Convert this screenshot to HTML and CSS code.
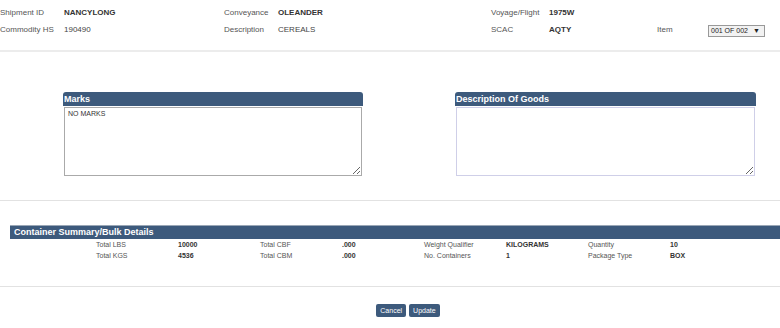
FILE: index.html
```html
<!DOCTYPE html>
<html lang="en">
<head>
  <meta charset="UTF-8" />
  <meta name="viewport" content="width=device-width, initial-scale=1.0" />
  <title>Shipment Item</title>
  <link rel="stylesheet" href="styles.css">
</head>
<body>
  <section class="shipment">
    <span class="lbl">Shipment ID</span><span class="val">NANCYLONG</span>
    <span class="lbl">Conveyance</span><span class="val">OLEANDER</span>
    <span class="lbl">Voyage/Flight</span><span class="val">1975W</span>
    <span></span><span></span>

    <span class="lbl">Commodity HS</span><span class="plain">190490</span>
    <span class="lbl">Description</span><span class="plain">CEREALS</span>
    <span class="lbl">SCAC</span><span class="val">AQTY</span>
    <span class="lbl">Item</span>
    <span class="item-select">001 OF 002 <b>▼</b></span>
  </section>

  <section class="notes">
    <div class="panel marks">
      <h3>Marks</h3>
      <textarea>NO MARKS</textarea>
    </div>
    <div class="panel goods">
      <h3>Description Of Goods</h3>
      <textarea></textarea>
    </div>
  </section>

  <section class="summary">
    <h3>Container Summary/Bulk Details</h3>
    <div class="summary-grid">
      <span class="lbl">Total LBS</span><span class="val">10000</span>
      <span class="lbl">Total CBF</span><span class="val">.000</span>
      <span class="lbl">Weight Qualifier</span><span class="val">KILOGRAMS</span>
      <span class="lbl">Quantity</span><span class="val">10</span>
      <span class="lbl">Total KGS</span><span class="val">4536</span>
      <span class="lbl">Total CBM</span><span class="val">.000</span>
      <span class="lbl">No. Containers</span><span class="val">1</span>
      <span class="lbl">Package Type</span><span class="val">BOX</span>
    </div>
  </section>

  <section class="actions">
    <button>Cancel</button>
    <button>Update</button>
  </section>
</body>
</html>
```

FILE: styles.css
```css
:root {
  --bar: #3d5a7c;
  --line: #e2e2e2;
}

body {
  margin: 0;
  font-family: 'Liberation Sans', Arial, sans-serif;
  font-size: 8px;
  color: #333;
  background: #fff;
}

.lbl {
  color: #555;
}

.val {
  font-weight: bold;
  color: #333;
}

.plain {
  color: #444;
}

.shipment {
  display: grid;
  grid-template-columns: 64px 160px 54px 213px 58px 108px 51px 60px;
  grid-auto-rows: 17px;
  align-items: center;
  padding: 4px 0 12px;
  border-bottom: 2px solid #ececec;
}

.item-select {
  width: 53px;
  height: 10px;
  line-height: 10px;
  border: 1px solid #999;
  background: #f2f2f2;
  font-size: 7px;
  padding-left: 2px;
  color: #222;
  margin-top: 3px;
}

.item-select b {
  font-size: 7px;
  margin-left: 3px;
}

.notes {
  display: flex;
  padding: 40px 0 24px;
  border-bottom: 1px solid var(--line);
}

.panel h3 {
  margin: 0;
  height: 14px;
  line-height: 14px;
  background: var(--bar);
  color: #fff;
  font-size: 9px;
  font-weight: bold;
  padding-left: 1px;
  border-radius: 3px 3px 0 0;
}

.panel textarea {
  display: block;
  box-sizing: border-box;
  width: calc(100% - 2px);
  height: 69px;
  margin: 1px 0 0 1px;
  padding: 2px 3px;
  font-family: 'Liberation Sans', Arial, sans-serif;
  font-size: 7px;
  color: #333;
  border: 1px solid #aaa;
}

.marks {
  width: 300px;
  margin-left: 63px;
}

.goods {
  width: 301px;
  margin-left: 92px;
}

.goods textarea {
  border: 1px solid #cfcfe8;
}

.summary {
  padding: 24px 0 25px;
  border-bottom: 1px solid var(--line);
}

.summary h3 {
  margin: 0 0 0 10px;
  height: 13px;
  line-height: 13px;
  background: var(--bar);
  border-top: 1px solid #9aa7b6;
  color: #fff;
  font-size: 9px;
  font-weight: bold;
  padding-left: 4px;
}

.summary-grid {
  display: grid;
  grid-template-columns: repeat(8, 82px);
  grid-auto-rows: 11px;
  align-items: center;
  padding-left: 96px;
  font-size: 7px;
}

.actions {
  display: flex;
  justify-content: center;
  gap: 3px;
  padding: 17px 0 0 36px;
}

.actions button {
  height: 13px;
  padding: 0 4px;
  border: none;
  border-radius: 2px;
  background: var(--bar);
  color: #fff;
  font-family: 'Liberation Sans', Arial, sans-serif;
  font-size: 7px;
  cursor: pointer;
}
```
